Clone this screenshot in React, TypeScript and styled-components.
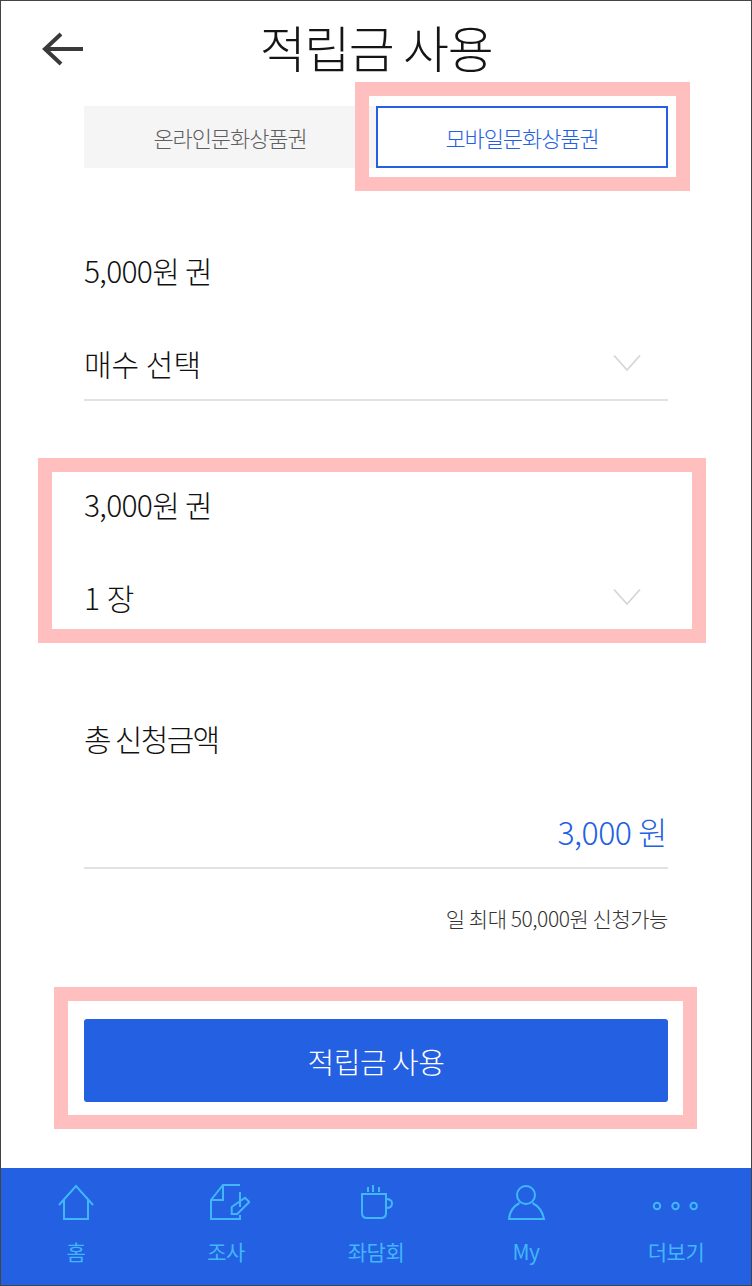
import React from 'react';
import styled, { createGlobalStyle } from 'styled-components';

const GlobalStyle = createGlobalStyle`
  html, body {
    margin: 0;
    padding: 0;
    background: #ffffff;
  }
  * {
    box-sizing: border-box;
  }
`;

const FONT = `'Noto Sans CJK KR', 'Noto Sans', sans-serif`;
const BLUE = '#2360e2';
const NAV_COLOR = '#41b6fa';

const Frame = styled.div`
  position: relative;
  width: 752px;
  height: 1286px;
  border: 1px solid #444444;
  display: flex;
  flex-direction: column;
  font-family: ${FONT};
  font-weight: 300;
  color: #111111;
  overflow: hidden;
  background: #ffffff;
`;

const Header = styled.header`
  height: 105px;
  flex-shrink: 0;
  display: flex;
  align-items: flex-start;
  justify-content: center;
  position: relative;
`;

const BackButton = styled.button`
  position: absolute;
  left: 41px;
  top: 30px;
  width: 44px;
  height: 36px;
  padding: 0;
  border: 0;
  background: transparent;
  svg {
    display: block;
  }
`;

const Title = styled.h1`
  margin: 13px 0 0;
  font-size: 50px;
  line-height: 64px;
  font-weight: 300;
  letter-spacing: -1.4px;
  color: #151515;
`;

const Content = styled.main`
  flex: 1;
  padding: 0 83px;
  display: flex;
  flex-direction: column;
`;

const Tabs = styled.div`
  display: grid;
  grid-template-columns: 1fr 1fr;
  height: 62px;
`;

const Tab = styled.button<{ $active?: boolean }>`
  font-family: ${FONT};
  font-size: 22px;
  font-weight: 300;
  letter-spacing: -1.1px;
  padding: 0;
  background: ${(p) => (p.$active ? '#ffffff' : '#f5f5f5')};
  color: ${(p) => (p.$active ? BLUE : '#5f5f5f')};
  border: ${(p) => (p.$active ? `2px solid ${BLUE}` : '0')};
`;

const Field = styled.section`
  margin-top: 74px;
  & + & {
    margin-top: 75px;
  }
`;

const Label = styled.div<{ $spacing: number }>`
  height: 60px;
  line-height: 56px;
  font-size: 30px;
  letter-spacing: ${(p) => p.$spacing}px;
`;

const ValueRow = styled.div`
  height: 73px;
  margin-top: 26px;
  padding-bottom: 1px;
  display: flex;
  align-items: center;
  justify-content: space-between;
  border-bottom: 2px solid #e2e2e2;
  font-size: 30px;
`;

const Chevron = styled.svg`
  margin-right: 27px;
  display: block;
`;

const Amount = styled.span`
  margin-left: auto;
  margin-right: 1px;
  font-size: 32px;
  letter-spacing: -0.5px;
  font-weight: 300;
  color: ${BLUE};
`;

const Note = styled.p`
  margin: 35px 0 0 0;
  text-align: right;
  font-size: 21px;
  line-height: 28px;
  letter-spacing: -0.45px;
  color: #333333;
`;

const SubmitButton = styled.button`
  margin-top: 87px;
  height: 83px;
  flex-shrink: 0;
  border: 0;
  border-radius: 3px;
  background: ${BLUE};
  color: #ffffff;
  font-family: ${FONT};
  font-size: 29px;
  font-weight: 300;
  letter-spacing: -0.5px;
`;

const Nav = styled.nav`
  height: 117px;
  flex-shrink: 0;
  background: ${BLUE};
  display: grid;
  grid-template-columns: repeat(5, 150px);
`;

const NavItem = styled.div`
  display: flex;
  flex-direction: column;
  align-items: center;
  padding-top: 14px;
  color: ${NAV_COLOR};
  font-size: 21px;
  font-weight: 400;
  letter-spacing: -0.5px;
  svg {
    display: block;
  }
`;

const NavLabel = styled.span`
  margin-top: 12px;
  line-height: 30px;
`;

const Highlight = styled.div<{ $left: number; $top: number; $width: number; $height: number }>`
  position: absolute;
  left: ${(p) => p.$left}px;
  top: ${(p) => p.$top}px;
  width: ${(p) => p.$width}px;
  height: ${(p) => p.$height}px;
  border: 14px solid #ffbfbf;
  pointer-events: none;
`;

function ChevronDown() {
  return (
    <Chevron width="28" height="18" viewBox="0 0 28 18" fill="none">
      <path d="M1 1.5 L14 16 L27 1.5" stroke="#d6d6d6" strokeWidth="1.8" />
    </Chevron>
  );
}

function NavIcon({ children }: { children: React.ReactNode }) {
  return (
    <svg
      width="48"
      height="42"
      viewBox="0 0 48 42"
      fill="none"
      stroke={NAV_COLOR}
      strokeWidth="2"
    >
      {children}
    </svg>
  );
}

const navItems = [
  {
    label: '홈',
    icon: (
      <>
        <path d="M7 23 L24 4 L41 23" />
        <path d="M12 17.5 V37 H36 V17.5" />
      </>
    ),
  },
  {
    label: '조사',
    icon: (
      <>
        <path d="M38 3 H21 L9 18 V37 H38 V33" />
        <path d="M21 3 V18 H9" />
        <path d="M38 10 V25" />
        <path d="M29.7 25 L43 15.7 L47.3 20 L35.3 32 H29.7 Z" />
      </>
    ),
  },
  {
    label: '좌담회',
    icon: (
      <>
        <path d="M10 12 H34 V31 Q34 36 29 36 H15 Q10 36 10 31 Z" />
        <path d="M34 17 Q40 17 40 21.5 Q40 26 34 26" />
        <path d="M16 5 V10 M21 3 V10 M27 5 V10" />
      </>
    ),
  },
  {
    label: 'My',
    icon: (
      <>
        <circle cx="24" cy="13" r="9" />
        <path d="M17.5 21 Q8 26 7 37 H42 Q40 26 30.5 21" />
      </>
    ),
  },
  {
    label: '더보기',
    icon: (
      <>
        <circle cx="5" cy="24" r="3.2" />
        <circle cx="23.5" cy="24" r="3.2" />
        <circle cx="41.7" cy="24" r="3.2" />
      </>
    ),
  },
];

function App() {
  return (
    <>
      <GlobalStyle />
      <Frame>
        <Header>
          <BackButton aria-label="back">
            <svg width="44" height="36" viewBox="0 0 44 36" fill="none">
              <path
                d="M19 3 L3 18 L19 33 M3 18 H41"
                stroke="#3a3a3a"
                strokeWidth="4"
              />
            </svg>
          </BackButton>
          <Title>적립금 사용</Title>
        </Header>
        <Content>
          <Tabs>
            <Tab>온라인문화상품권</Tab>
            <Tab $active>모바일문화상품권</Tab>
          </Tabs>
          <Field>
            <Label $spacing={-0.7}>5,000원 권</Label>
            <ValueRow>
              매수 선택
              <ChevronDown />
            </ValueRow>
          </Field>
          <Field>
            <Label $spacing={-0.7}>3,000원 권</Label>
            <ValueRow>
              1 장
              <ChevronDown />
            </ValueRow>
          </Field>
          <Field>
            <Label $spacing={-1.7}>총 신청금액</Label>
            <ValueRow>
              <Amount>3,000 원</Amount>
            </ValueRow>
          </Field>
          <Note>일 최대 50,000원 신청가능</Note>
          <SubmitButton>적립금 사용</SubmitButton>
        </Content>
        <Nav>
          {navItems.map((item) => (
            <NavItem key={item.label}>
              <NavIcon>{item.icon}</NavIcon>
              <NavLabel>{item.label}</NavLabel>
            </NavItem>
          ))}
        </Nav>
        <Highlight $left={354} $top={81} $width={335} $height={109} />
        <Highlight $left={37} $top={457} $width={668} $height={185} />
        <Highlight $left={53} $top={986} $width={643} $height={142} />
      </Frame>
    </>
  );
}

export default App;
